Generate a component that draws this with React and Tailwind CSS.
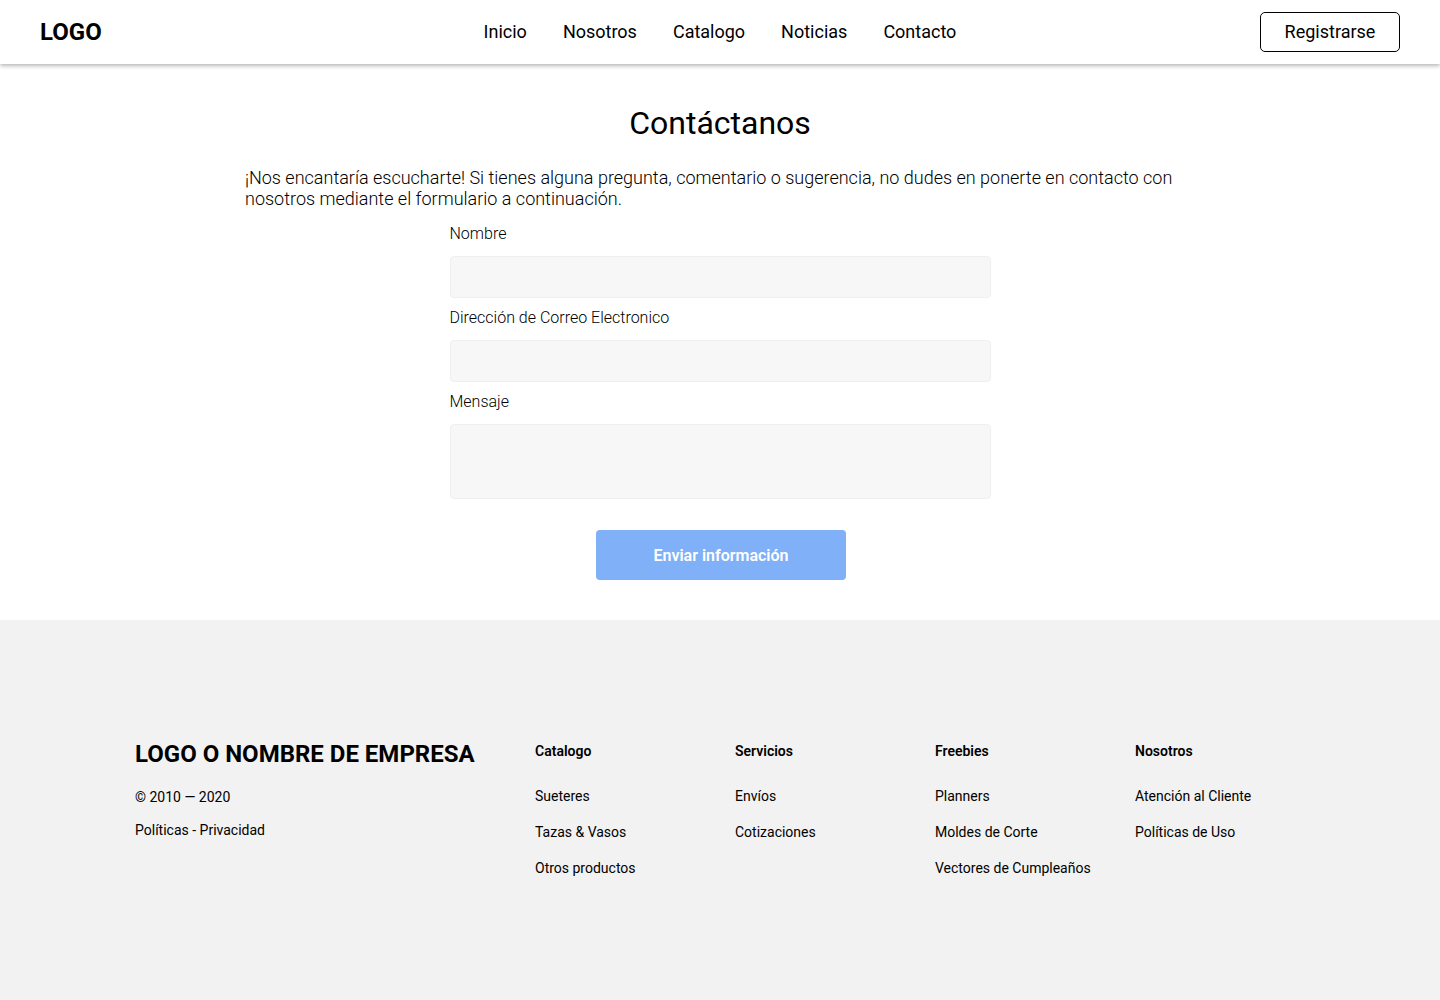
export default function App() {
  const navItems = ["Inicio", "Nosotros", "Catalogo", "Noticias", "Contacto"];

  const columns = [
    { title: "Catalogo", items: ["Sueteres", "Tazas & Vasos", "Otros productos"] },
    { title: "Servicios", items: ["Envíos", "Cotizaciones"] },
    { title: "Freebies", items: ["Planners", "Moldes de Corte", "Vectores de Cumpleaños"] },
    { title: "Nosotros", items: ["Atención al Cliente", "Políticas de Uso"] },
  ];

  return (
    <div className="min-h-[1000px] bg-white text-black font-['Roboto',sans-serif]">
      {/* Header */}
      <header className="relative z-10 h-16 bg-white flex items-center justify-between px-10 shadow-[0_2px_4px_rgba(0,0,0,0.28)]">
        <div className="text-2xl font-bold">LOGO</div>
        <nav className="absolute left-1/2 -translate-x-1/2 flex items-center gap-9 text-lg">
          {navItems.map((item) => (
            <a key={item} href="#" className="text-black">
              {item}
            </a>
          ))}
        </nav>
        <button className="w-[140px] h-10 border border-black rounded-[5px] text-lg">
          Registrarse
        </button>
      </header>

      {/* Contact form */}
      <main className="pt-10 pb-10">
        <h1 className="text-center text-[32px] leading-[38px]">Contáctanos</h1>
        <p className="w-[950px] mx-auto mt-[25px] text-lg leading-[21px] font-light">
          ¡Nos encantaría escucharte! Si tienes alguna pregunta, comentario o sugerencia, no dudes en ponerte en contacto con nosotros mediante el formulario a continuación.
        </p>

        <form className="w-[541px] mx-auto mt-[15px] flex flex-col">
          <label className="text-base leading-5 font-light">Nombre</label>
          <input className="mt-[12px] h-[42px] bg-[#f7f7f7] border border-[#efefef] rounded-[4px] px-3 outline-none" />

          <label className="mt-[10px] text-base leading-5 font-light">Dirección de Correo Electronico</label>
          <input className="mt-[12px] h-[42px] bg-[#f7f7f7] border border-[#efefef] rounded-[4px] px-3 outline-none" />

          <label className="mt-[10px] text-base leading-5 font-light">Mensaje</label>
          <textarea className="mt-[12px] h-[75px] bg-[#f7f7f7] border border-[#efefef] rounded-[4px] px-3 py-2 resize-none outline-none" />

          <button
            type="button"
            className="mt-[31px] self-center w-[250px] h-[50px] pt-[2px] bg-[#80b0f8] text-white font-semibold text-base rounded-[4px] ml-[2px]"
          >
            Enviar información
          </button>
        </form>
      </main>

      {/* Footer */}
      <footer className="h-[380px] bg-[#f2f2f2] pt-[120px] pl-[135px]">
        <div className="flex">
          <div className="w-[400px]">
            <div className="text-2xl font-bold leading-7">LOGO O NOMBRE DE EMPRESA</div>
            <div className="mt-[19px] text-sm leading-5">© 2010 — 2020</div>
            <div className="mt-[13px] text-sm leading-5">Políticas - Privacidad</div>
          </div>
          {columns.map((col) => (
            <div key={col.title} className="w-[200px] pt-[1px]">
              <div className="text-sm font-semibold leading-5">{col.title}</div>
              <ul className="mt-[25px] flex flex-col gap-4">
                {col.items.map((item) => (
                  <li key={item} className="text-sm leading-5">
                    {item}
                  </li>
                ))}
              </ul>
            </div>
          ))}
        </div>
      </footer>
    </div>
  );
}
